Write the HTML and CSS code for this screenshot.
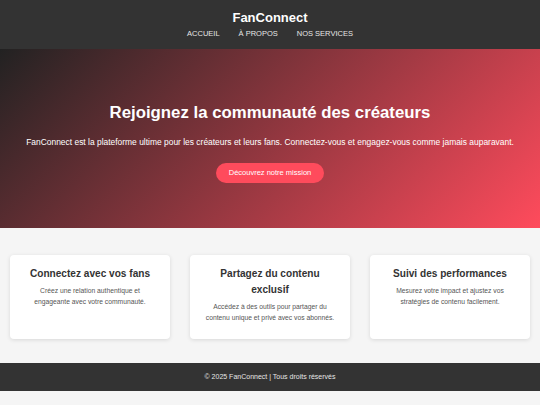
FILE: index.html
```html
<!DOCTYPE html>
<html lang="fr">
<head>
<meta charset="utf-8">
<title>FanConnect</title>
<link rel="stylesheet" href="styles.css">
</head>
<body>
<header class="site-header">
  <div class="brand">FanConnect</div>
  <nav class="nav">
    <a href="#">ACCUEIL</a>
    <a href="#">À PROPOS</a>
    <a href="#">NOS SERVICES</a>
  </nav>
</header>
<section class="hero">
  <h1 class="hero-title">Rejoignez la communauté des créateurs</h1>
  <p class="hero-text">FanConnect est la plateforme ultime pour les créateurs et leurs fans. Connectez-vous et engagez-vous comme jamais auparavant.</p>
  <a class="hero-btn" href="#">Découvrez notre mission</a>
</section>
<section class="features">
  <div class="card">
    <h3 class="card-title">Connectez avec vos fans</h3>
    <p class="card-text">Créez une relation authentique et engageante avec votre communauté.</p>
  </div>
  <div class="card">
    <h3 class="card-title">Partagez du contenu exclusif</h3>
    <p class="card-text">Accédez à des outils pour partager du contenu unique et privé avec vos abonnés.</p>
  </div>
  <div class="card">
    <h3 class="card-title">Suivi des performances</h3>
    <p class="card-text">Mesurez votre impact et ajustez vos stratégies de contenu facilement.</p>
  </div>
</section>
<footer class="site-footer">© 2025 FanConnect | Tous droits réservés</footer>
</body>
</html>
```
FILE: styles.css
```css
* { box-sizing: border-box; }
body {
  margin: 0;
  font-family: "Liberation Sans", Arial, sans-serif;
  background: #f5f5f5;
  color: #333;
}
.site-header {
  background: #333;
  color: #fff;
  text-align: center;
  padding: 10px 0 9px;
}
.brand {
  font-weight: bold;
  font-size: 13px;
  line-height: 16px;
}
.nav {
  margin-top: 2px;
  display: flex;
  justify-content: center;
  gap: 19px;
  line-height: 12px;
}
.nav a {
  color: #e6e6e6;
  text-decoration: none;
  font-size: 7.5px;
}
.hero {
  background: linear-gradient(135deg, #222 0%, #ff4b5c 100%);
  color: #fff;
  text-align: center;
  padding: 54px 10px 45px;
}
.hero-title {
  margin: 0 0 13px;
  font-size: 16.8px;
  line-height: 20px;
  font-weight: bold;
}
.hero-text {
  margin: 0 0 12.7px;
  font-size: 8.45px;
  line-height: 12px;
}
.hero-btn {
  display: inline-block;
  background: #ff4b5c;
  color: #fff;
  text-decoration: none;
  font-size: 7.5px;
  line-height: 8.6px;
  padding: 6px 12.5px;
  border-radius: 11px;
}
.features {
  display: grid;
  grid-template-columns: repeat(3, 1fr);
  gap: 20px;
  padding: 27px 10px 24px;
}
.card {
  background: #fff;
  border-radius: 4px;
  box-shadow: 0 1px 4px rgba(0, 0, 0, 0.12);
  padding: 11px 13px 16px;
  text-align: center;
}
.card-title {
  margin: 0 0 4.5px;
  font-size: 10.1px;
  line-height: 15.7px;
  color: #333;
}
.card-text {
  margin: 0;
  font-size: 6.75px;
  line-height: 10.5px;
  color: #555;
}
.site-footer {
  background: #333;
  color: #e6e6e6;
  text-align: center;
  font-size: 7px;
  line-height: 8px;
  padding: 10px 0;
}
```
